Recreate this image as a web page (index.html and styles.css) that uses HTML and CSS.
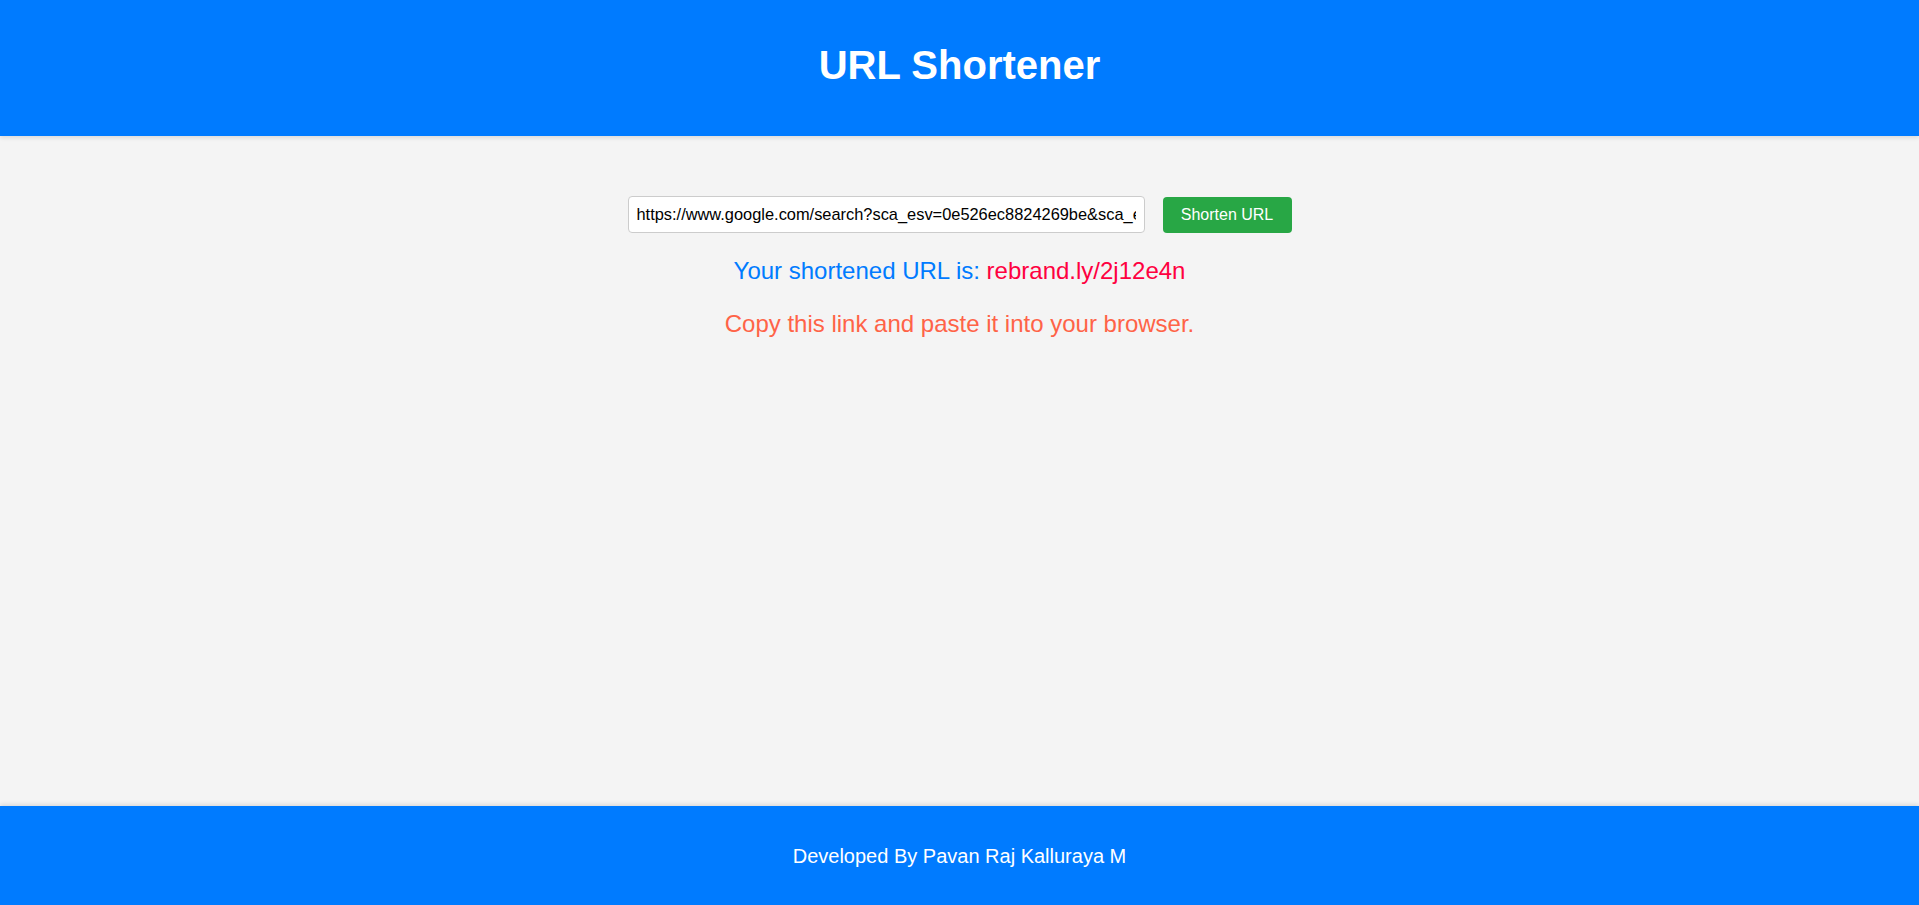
FILE: index.html
```html
<!DOCTYPE html>
<html lang="en">
<head>
<meta charset="UTF-8">
<title>URL Shortener</title>
<link rel="stylesheet" href="styles.css">
</head>
<body>
<header class="site-header">
  <h1 class="title">URL Shortener</h1>
</header>
<main class="main">
  <form class="shorten-form" onsubmit="return false;">
    <input class="url-input" type="text" value="https://www.google.com/search?sca_esv=0e526ec8824269be&sca_esv=0e526ec8824269be&q=url+shortener">
    <button class="shorten-btn" type="submit">Shorten URL</button>
  </form>
  <p class="result">Your shortened URL is: <span class="short-link">rebrand.ly/2j12e4n</span></p>
  <p class="hint">Copy this link and paste it into your browser.</p>
</main>
<footer class="site-footer">
  <p class="credit">Developed By Pavan Raj Kalluraya M</p>
</footer>
</body>
</html>
```
FILE: styles.css
```css
* { box-sizing: border-box; }

html, body {
  margin: 0;
  padding: 0;
  height: 100%;
}

body {
  font-family: "Liberation Sans", Arial, sans-serif;
  background: #f4f4f4;
  display: flex;
  flex-direction: column;
  min-height: 100vh;
}

.site-header {
  background: #007bff;
  color: #fff;
  text-align: center;
  padding: 42px 0 48px;
  box-shadow: 0 2px 4px rgba(0, 0, 0, 0.1);
  position: relative;
  z-index: 1;
}

.title {
  margin: 0;
  font-size: 40px;
  line-height: 46px;
  font-weight: bold;
}

.main {
  flex: 1;
  padding-top: 60px;
  text-align: center;
}

.shorten-form {
  display: flex;
  justify-content: center;
  align-items: center;
  gap: 18px;
  margin: 0;
}

.url-input {
  width: 517px;
  height: 37px;
  padding: 0 8px;
  font-family: "Liberation Sans", Arial, sans-serif;
  font-size: 16.4px;
  color: #000;
  background: #fff;
  border: 1px solid #ccc;
  border-radius: 4px;
  outline: none;
}

.shorten-btn {
  height: 36px;
  width: 129px;
  padding: 0;
  font-family: "Liberation Sans", Arial, sans-serif;
  font-size: 16px;
  color: #fff;
  background: #28a745;
  border: none;
  border-radius: 4px;
  cursor: pointer;
}

.result,
.hint {
  font-size: 24px;
  line-height: 28px;
  margin: 24px 0 0;
}

.hint { margin-top: 25px; }

.result { color: #007bff; }
.short-link { color: #ff0040; }
.hint { color: #ff6347; }

.site-footer {
  background: #007bff;
  color: #fff;
  text-align: center;
  padding: 39px 0 37px;
  box-shadow: 0 -2px 4px rgba(0, 0, 0, 0.1);
}

.credit {
  margin: 0;
  font-size: 20px;
  line-height: 23px;
}
```
